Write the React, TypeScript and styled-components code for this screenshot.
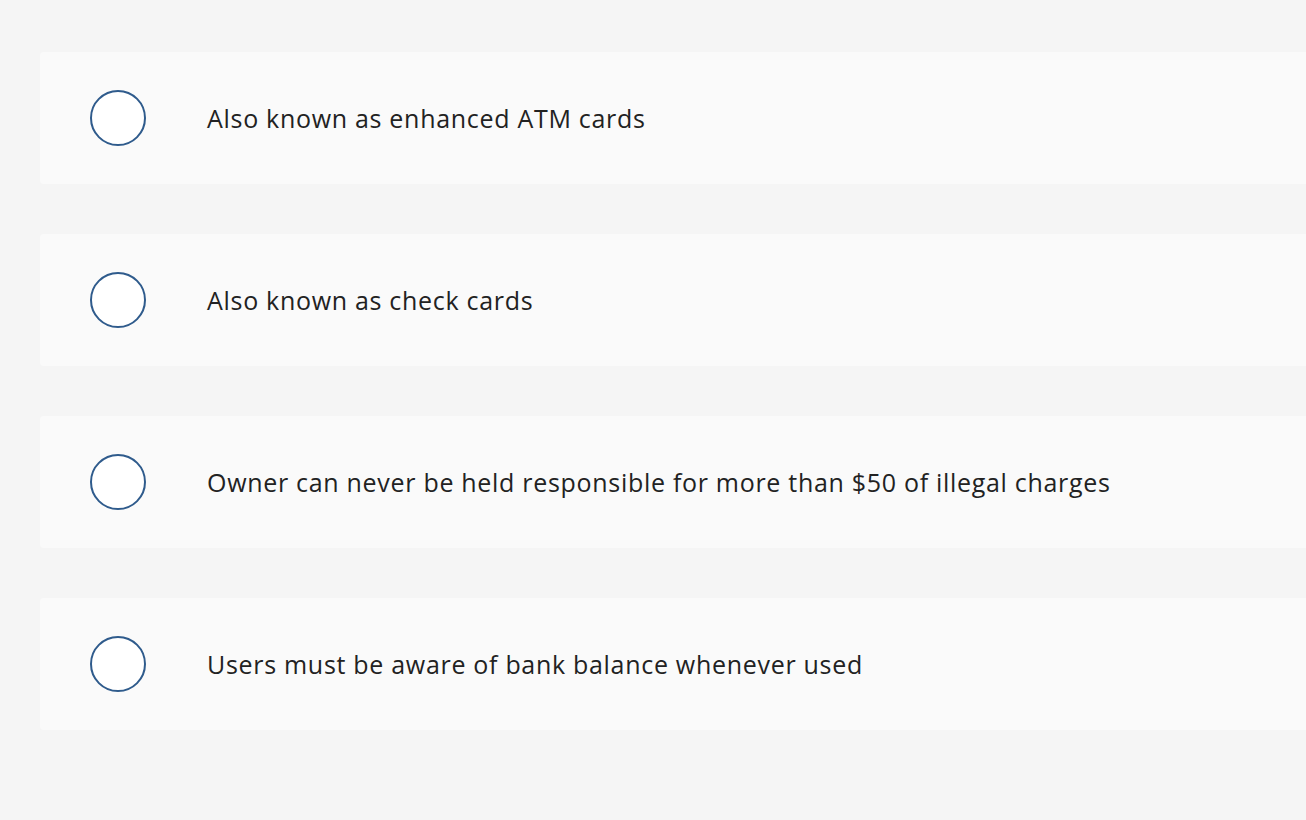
import styled, { createGlobalStyle } from 'styled-components';

const GlobalStyle = createGlobalStyle`
  html, body {
    margin: 0;
    padding: 0;
    background: #f5f5f5;
    overflow: hidden;
  }
`;

const OPTIONS = [
  'Also known as enhanced ATM cards',
  'Also known as check cards',
  'Owner can never be held responsible for more than $50 of illegal charges',
  'Users must be aware of bank balance whenever used',
];

const App: React.FC = () => {
  return (
    <>
      <GlobalStyle />
      <Page>
        {OPTIONS.map((label) => (
          <Option key={label}>
            <Radio />
            <Label>{label}</Label>
          </Option>
        ))}
      </Page>
    </>
  );
};

const Page = styled.div`
  width: 1306px;
  height: 820px;
  padding: 52px 0 0 40px;
  box-sizing: border-box;
  background: #f5f5f5;
  overflow: hidden;

  display: flex;
  flex-direction: column;
  gap: 50px;
`;

const Option = styled.div`
  width: 1320px;
  height: 132px;
  flex-shrink: 0;
  background: #fafafa;
  border-radius: 4px;
  padding-left: 50px;
  box-sizing: border-box;

  display: flex;
  align-items: center;
`;

const Radio = styled.div`
  width: 56px;
  height: 56px;
  box-sizing: border-box;
  border: 2px solid #2f5b8c;
  border-radius: 50%;
  background: #ffffff;
  flex-shrink: 0;
`;

const Label = styled.div`
  margin-left: 61px;
  font-family: 'Open Sans', 'Lato', sans-serif;
  font-size: 25px;
  letter-spacing: 0.7px;
  color: #222222;
  white-space: nowrap;
`;

export default App;
